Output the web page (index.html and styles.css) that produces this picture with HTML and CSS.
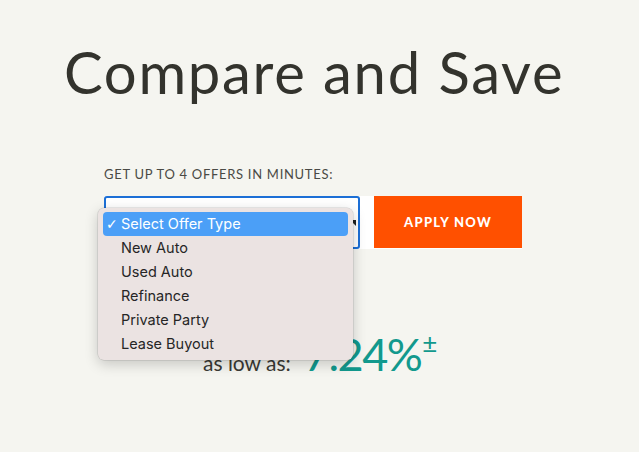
FILE: index.html
```html
<!DOCTYPE html>
<html>
<head>
<meta charset="utf-8">
<link rel="stylesheet" href="styles.css">
</head>
<body>
<main class="page">
  <h1 class="title">Compare and Save</h1>
  <section class="offer">
    <p class="label">GET UP TO 4 OFFERS IN MINUTES:</p>
    <div class="form-row">
      <div class="select-wrap">
        <div class="select-box"><span class="arrow"></span></div>
        <ul class="menu">
          <li class="item selected"><span class="check">✓</span>Select Offer Type</li>
          <li class="item">New Auto</li>
          <li class="item">Used Auto</li>
          <li class="item">Refinance</li>
          <li class="item">Private Party</li>
          <li class="item">Lease Buyout</li>
        </ul>
      </div>
      <button class="apply">APPLY NOW</button>
    </div>
  </section>
  <div class="rate">
    <span class="as-low">as low as:</span>
    <span class="value">7.24%</span><sup class="pm">±</sup>
  </div>
</main>
</body>
</html>
```
FILE: styles.css
```css
* { box-sizing: border-box; }
html, body { margin: 0; padding: 0; }
body {
  background: #f5f5f0;
  width: 639px;
  height: 452px;
  overflow: hidden;
  font-family: "Lato", "Noto Sans", sans-serif;
}
.page {
  display: flex;
  flex-direction: column;
  align-items: flex-start;
}
.title {
  margin: 36px 0 0 64px;
  font-family: "Lato", sans-serif;
  font-weight: 400;
  font-size: 58px;
  line-height: 72px;
  color: #33332d;
  letter-spacing: 1.7px;
}
.offer {
  margin: 58px 0 0 104px;
  width: 418px;
}
.label {
  margin: 0;
  font-size: 13px;
  line-height: 16px;
  color: #4a4a45;
  letter-spacing: 0.7px;
}
.form-row {
  display: flex;
  margin-top: 14px;
  height: 53px;
  background: #fff;
  width: 418px;
}
.select-wrap {
  position: relative;
  width: 270px;
}
.select-box {
  width: 256px;
  height: 53px;
  border: 2px solid #1c6fd6;
  border-radius: 3px;
  background: #fff;
  position: relative;
}
.arrow {
  position: absolute;
  right: 2px;
  top: 22px;
  width: 0; height: 0;
  border-left: 6px solid transparent;
  border-top: 6px solid #222;
}
.apply {
  width: 148px;
  height: 52px;
  background: #ff5000;
  border: none;
  color: #fff;
  font-family: "Lato", sans-serif;
  font-weight: 900;
  font-size: 13px;
  letter-spacing: 1.3px;
  padding: 0;
}
.menu {
  position: absolute;
  left: -6px;
  top: 12px;
  width: 255px;
  margin: 0;
  padding: 4px 5px;
  list-style: none;
  background: #ebe3e2;
  border-radius: 6px;
  box-shadow: 0 4px 14px rgba(0,0,0,0.2), 0 0 0 0.5px rgba(0,0,0,0.15);
  font-family: "Inter", "Liberation Sans", sans-serif;
  font-size: 14.5px;
  color: #262626;
  z-index: 2;
}
.item {
  height: 24px;
  line-height: 24px;
  padding-left: 18px;
  position: relative;
  border-radius: 4px;
}
.item.selected {
  background: #4b9ff7;
  color: #fff;
}
.check {
  position: absolute;
  left: 3px;
  font-size: 14px;
  font-family: "DejaVu Sans", sans-serif;
}
.rate {
  margin: 81px 0 0 203px;
  display: flex;
  align-items: baseline;
  color: #12998d;
}
.as-low {
  font-size: 21px;
  color: #3a3a35;
  margin-right: 13px;
}
.value {
  font-size: 45px;
  line-height: 48px;
  letter-spacing: -1.5px;
}
.pm {
  font-size: 26px;
  align-self: flex-start;
  margin-left: 1px;
  margin-top: 2px;
  line-height: 22px;
}
```
